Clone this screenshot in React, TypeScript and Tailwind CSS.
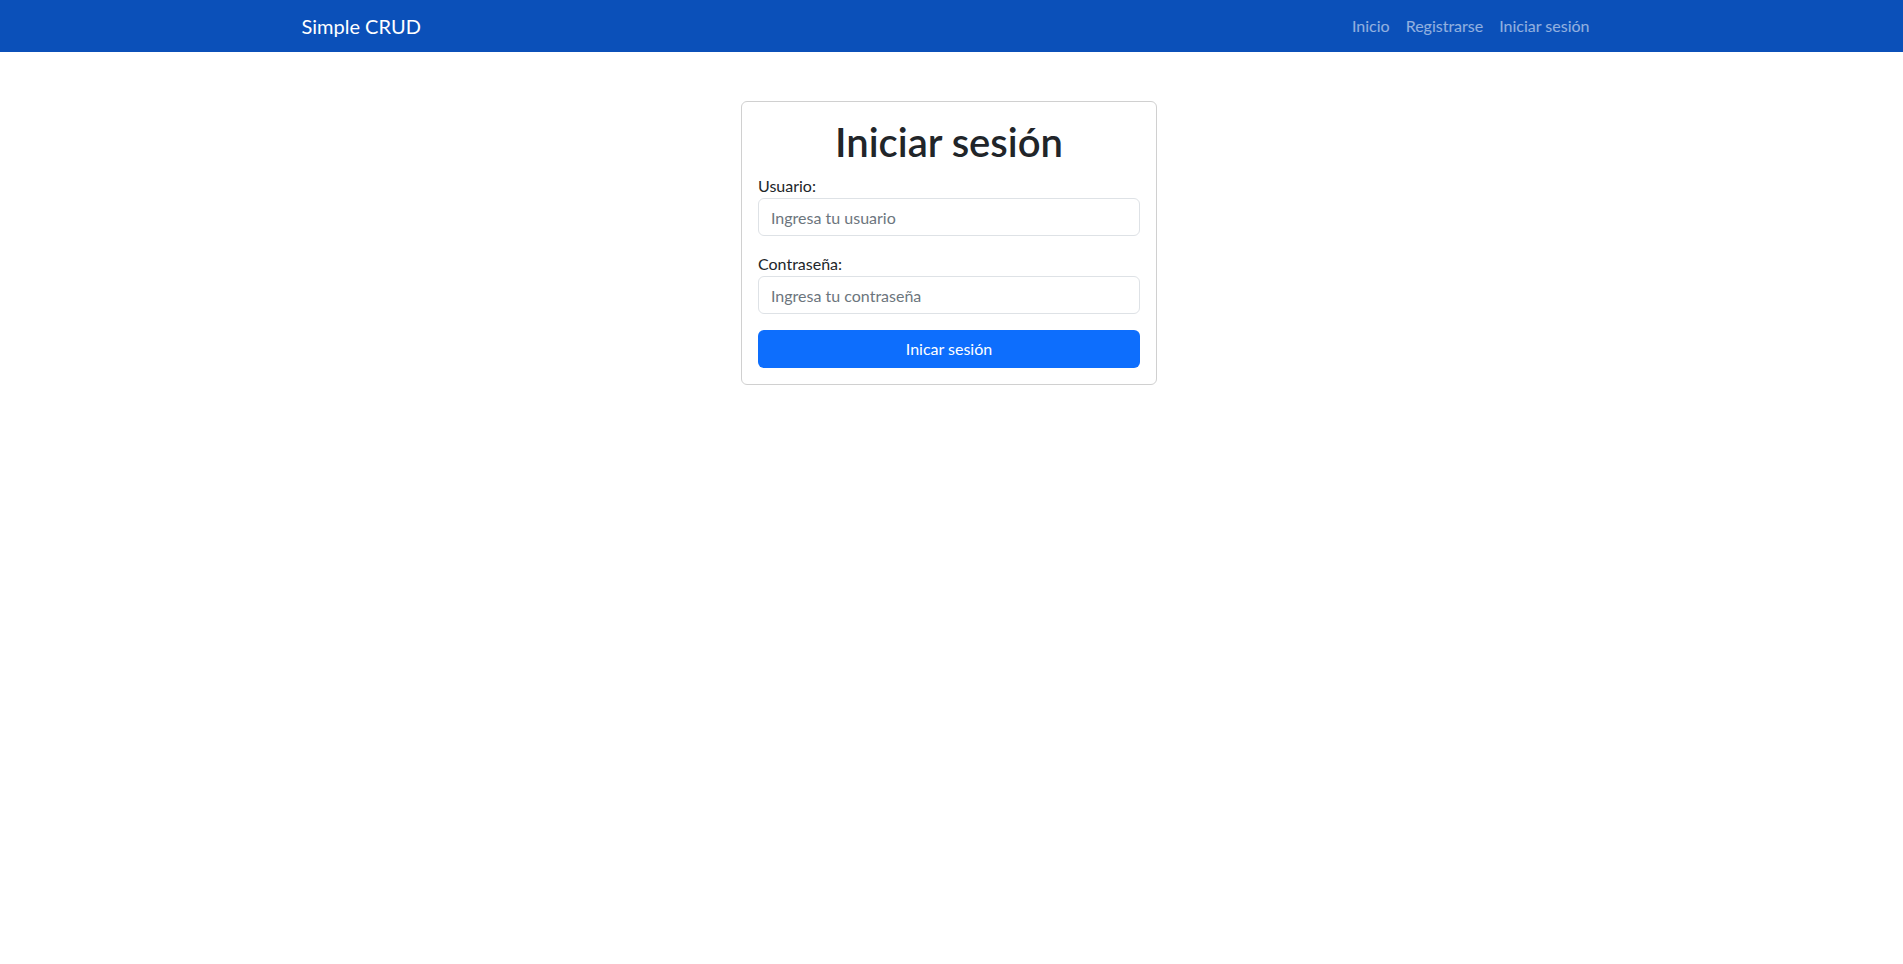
import React from 'react'

const links = ["Inicio", "Registrarse", "Iniciar sesión"];

export default function App() {
    return (
        <div className="min-h-screen bg-white text-[#212529] font-['Lato',sans-serif]">
            {/* Navbar */}
            <nav className="h-[52px] bg-[#0b50b9]">
                <div className="mx-auto flex h-full max-w-[1320px] -translate-x-[2px] items-center justify-between px-3">
                    <a className="text-[20px] leading-[30px] text-white">Simple CRUD</a>
                    <ul className="flex">
                        {links.map((l) => (
                            <li key={l}>
                                <a className="block px-2 text-[16px] leading-6 text-white/55">{l}</a>
                            </li>
                        ))}
                    </ul>
                </div>
            </nav>

            {/* Login card */}
            <div className="mt-[49px] flex justify-center pr-[5px]">
                <div className="w-[416px] rounded-md border border-[#d0d0d0] p-4">
                    <h1 className="mb-2 text-center text-[40px] leading-[48px] font-semibold">Iniciar sesión</h1>
                    <div className="mb-4">
                        <label className="block text-[16px] leading-6">Usuario:</label>
                        <input
                            className="block h-[38px] w-full rounded-md border border-[#dee2e6] px-3 text-[16px] outline-none placeholder:text-[#6c757d]"
                            placeholder="Ingresa tu usuario"
                        />
                    </div>
                    <div className="mb-4">
                        <label className="block text-[16px] leading-6">Contraseña:</label>
                        <input
                            type="password"
                            className="block h-[38px] w-full rounded-md border border-[#dee2e6] px-3 text-[16px] outline-none placeholder:text-[#6c757d]"
                            placeholder="Ingresa tu contraseña"
                        />
                    </div>
                    <button className="block h-[38px] w-full rounded-md bg-[#0d6efd] text-[16px] text-white">
                        Inicar sesión
                    </button>
                </div>
            </div>
        </div>
    );
}
